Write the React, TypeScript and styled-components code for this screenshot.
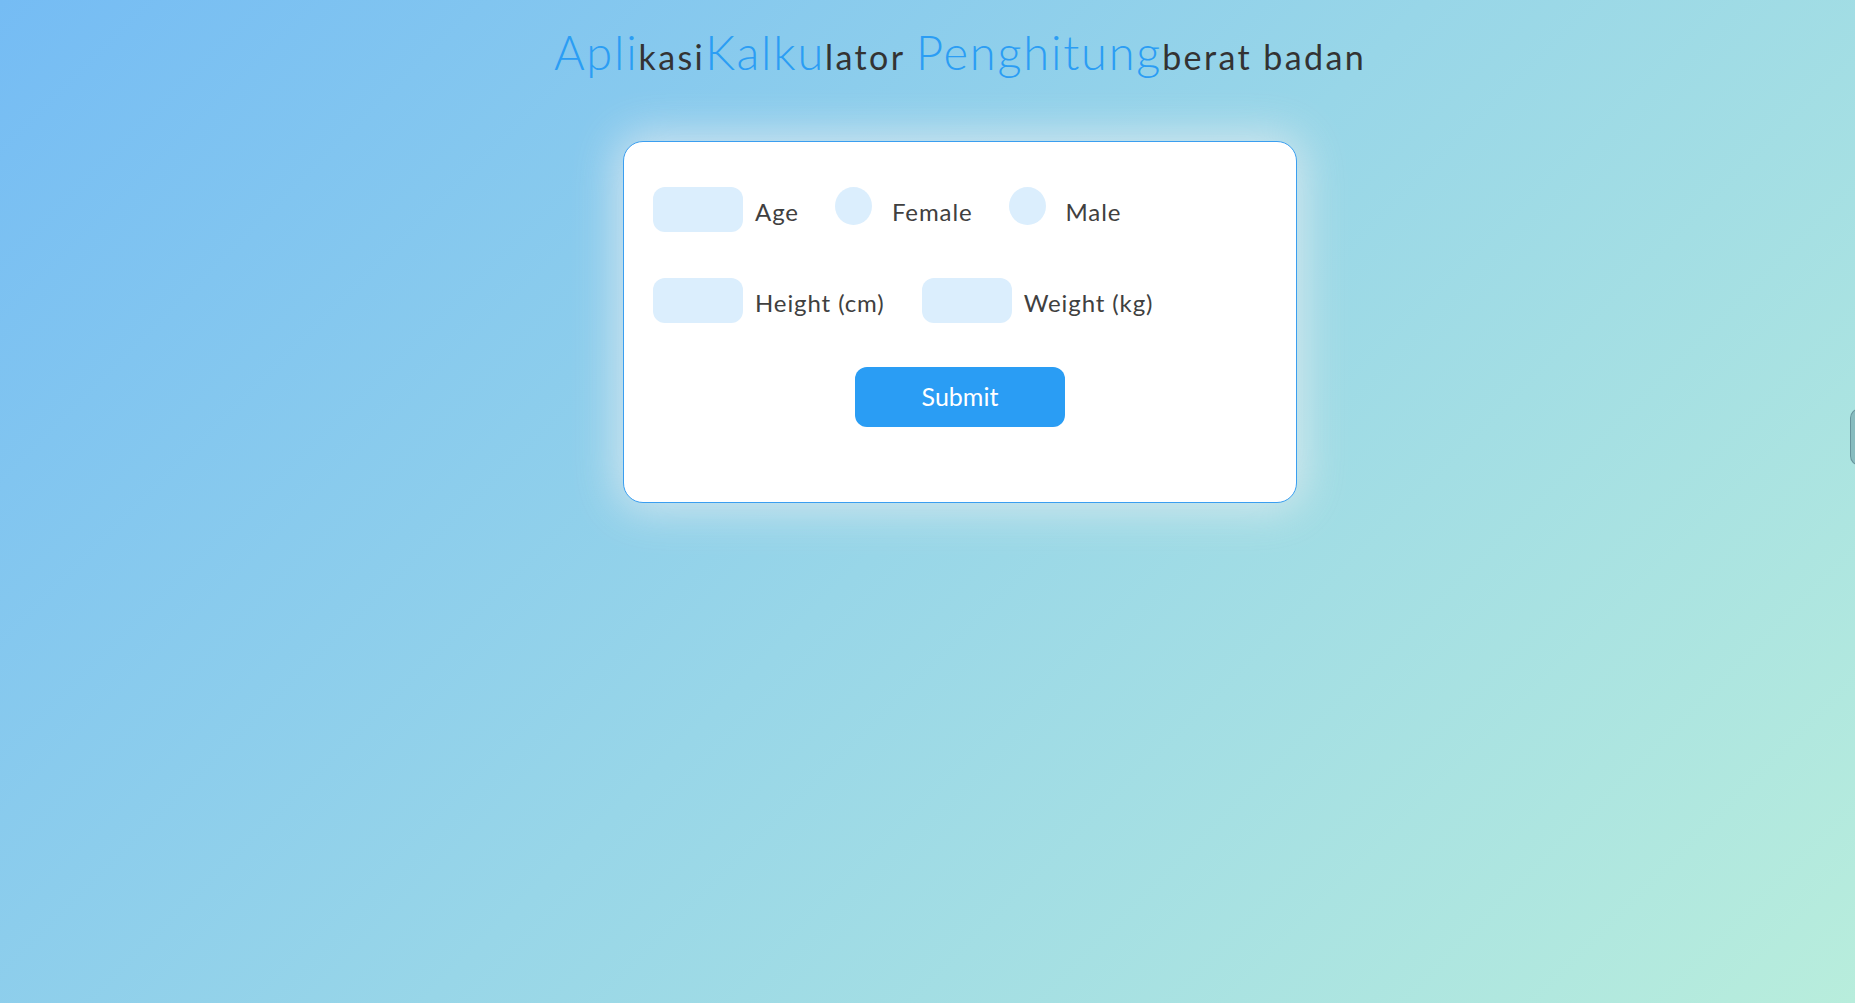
import React from "react";
import styled, { createGlobalStyle } from "styled-components";

const GlobalStyle = createGlobalStyle`
  html, body {
    margin: 0;
    padding: 0;
    min-height: 100%;
  }
  body {
    min-height: 1003px;
    background: linear-gradient(135deg, #75bcf4 0%, #98d6e8 50%, #b8eddc 100%);
    font-family: "Lato", "Open Sans", sans-serif;
    overflow: hidden;
  }
`;

const Page = styled.div`
  min-height: 1003px;
  display: flex;
  flex-direction: column;
  align-items: center;
  padding-left: 65px;
  box-sizing: border-box;
`;

const Title = styled.h1`
  margin: 22px 0 0;
  font-weight: 400;
  font-size: 34px;
  line-height: 60px;
  letter-spacing: 2.4px;
  color: #333333;
  white-space: nowrap;
`;

const Accent = styled.span`
  color: #2b9df4;
  font-size: 47px;
  font-weight: 300;
  letter-spacing: 1.8px;
`;

const Card = styled.form`
  margin-top: 54px;
  width: 674px;
  box-sizing: border-box;
  padding: 45px 29px 75px;
  background: #ffffff;
  border: 1px solid #3a9ef0;
  border-radius: 20px;
  box-shadow: 0 0 45px 6px rgba(235, 238, 240, 0.75);
  display: flex;
  flex-direction: column;
  gap: 44px;
`;

const Row = styled.div`
  display: flex;
  align-items: flex-start;
`;

const Field = styled.input`
  width: 90px;
  height: 45px;
  border: none;
  outline: none;
  border-radius: 12px;
  background: #dbeefd;
  padding: 0;
  margin: 0 12px 0 0;
`;

const Radio = styled.span`
  width: 37px;
  height: 38px;
  border-radius: 50%;
  background: #dbeefd;
  margin-right: 20px;
  flex: none;
`;

const Label = styled.label<{ $gap?: number }>`
  font-size: 24px;
  font-weight: 400;
  letter-spacing: 0.9px;
  color: #404040;
  line-height: 45px;
  padding-top: 2px;
  margin-right: ${(p) => p.$gap ?? 0}px;
  white-space: nowrap;
`;

const ButtonRow = styled.div`
  display: flex;
  justify-content: center;
`;

const Submit = styled.button`
  width: 210px;
  height: 60px;
  margin-top: -2px;
  border: none;
  border-radius: 12px;
  background: #2a9df4;
  color: #ffffff;
  font-family: "Lato", "Open Sans", sans-serif;
  font-size: 25px;
  font-weight: 400;
  padding: 0 0 3px;
  cursor: pointer;
`;

const SideTab = styled.div`
  position: fixed;
  top: 408px;
  left: 1850px;
  width: 20px;
  height: 56px;
  border-radius: 10px;
  background: rgba(90, 140, 150, 0.45);
  border: 1px solid rgba(70, 110, 120, 0.5);
`;

export default function App() {
  return (
    <>
      <GlobalStyle />
      <Page>
        <Title>
          <Accent>Apli</Accent>kasi<Accent>Kalku</Accent>lator{" "}
          <Accent>Penghitung</Accent>berat badan
        </Title>
        <Card onSubmit={(e) => e.preventDefault()}>
          <Row>
            <Field type="text" aria-label="Age" />
            <Label $gap={36}>Age</Label>
            <Radio />
            <Label $gap={36}>Female</Label>
            <Radio />
            <Label>Male</Label>
          </Row>
          <Row>
            <Field type="text" aria-label="Height" />
            <Label $gap={37}>Height (cm)</Label>
            <Field type="text" aria-label="Weight" />
            <Label>Weight (kg)</Label>
          </Row>
          <ButtonRow>
            <Submit type="submit">Submit</Submit>
          </ButtonRow>
        </Card>
      </Page>
      <SideTab />
    </>
  );
}
